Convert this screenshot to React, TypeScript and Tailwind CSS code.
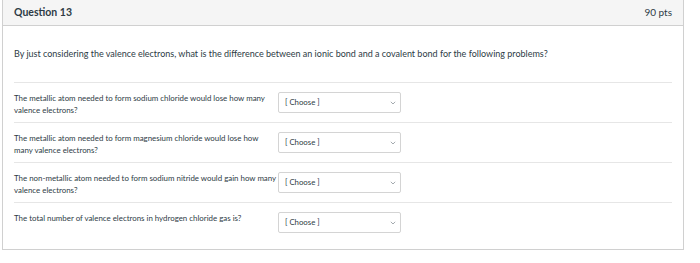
import React from "react";

const rows: { lines: string[] }[] = [
  { lines: ["The metallic atom needed to form sodium chloride would lose how many", "valence electrons?"] },
  { lines: ["The metallic atom needed to form magnesium chloride would lose how", "many valence electrons?"] },
  { lines: ["The non-metallic atom needed to form sodium nitride would gain how many", "valence electrons?"] },
  { lines: ["The total number of valence electrons in hydrogen chloride gas is?"] },
];

function Dropdown() {
  return (
    <div className="flex h-[21px] w-[123px] items-center justify-between rounded-[2px] border border-[#d4d4d4] bg-white pl-[6px] pr-[4px]">
      <span className="text-[7.8px] leading-none text-[#2d3b45]">[ Choose ]</span>
      <svg width="6" height="4" viewBox="0 0 6 4" className="mt-[1px]">
        <path d="M0.8 0.8 L3 3 L5.2 0.8" fill="none" stroke="#9aa0a6" strokeWidth="0.9" />
      </svg>
    </div>
  );
}

export default function App() {
  return (
    <div className="h-[263px] w-[700px] bg-white" style={{ fontFamily: "Lato, 'Liberation Sans', sans-serif" }}>
      <div className="ml-[2px] w-[682px] border border-t-0 border-[#d0d0d0]">
        <div className="flex h-[26px] items-center justify-between border-b border-[#d0d0d0] bg-[#f5f5f5] px-[11px]">
          <span className="text-[10.5px] font-bold text-[#2d3b45]">Question 13</span>
          <span className="text-[10px] text-[#2d3b45]">90 pts</span>
        </div>
        <div className="px-[11px] pb-[10px]">
          <p className="mt-[22px] mb-[22px] whitespace-nowrap text-[9px] leading-[12px] text-[#2d3b45]">
            By just considering the valence electrons, what is the difference between an ionic bond and a covalent bond for the following problems?
          </p>
          {rows.map((r, i) => (
            <div key={i} className="flex items-start border-t border-[#e6e6e6] pt-[9px] pb-[6px]">
              <div className="w-[264px] whitespace-nowrap text-[7.9px] leading-[12px] text-[#2d3b45]">
                {r.lines.map((l, j) => (
                  <div key={j}>{l}</div>
                ))}
              </div>
              <Dropdown />
            </div>
          ))}
        </div>
      </div>
    </div>
  );
}
